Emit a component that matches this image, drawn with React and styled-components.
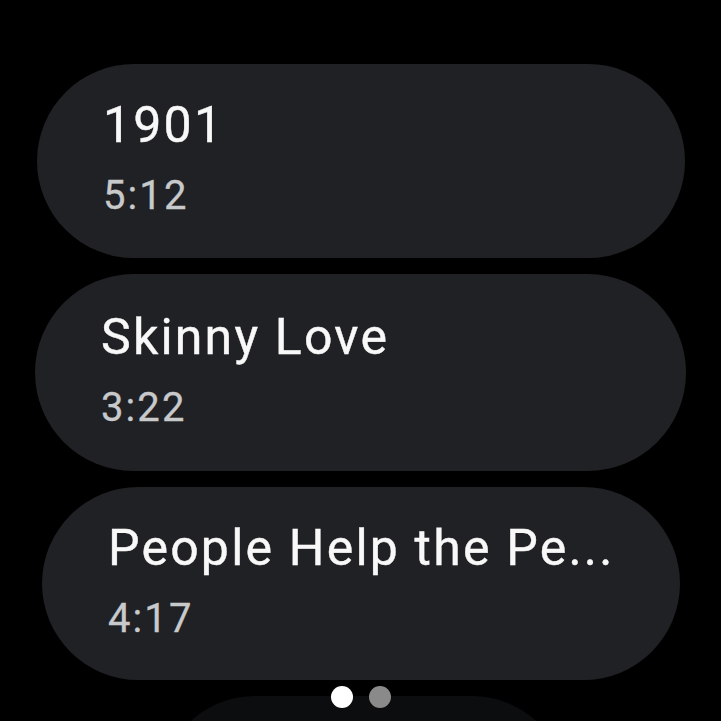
import React from "react";
import styled, { createGlobalStyle } from "styled-components";

const Global = createGlobalStyle`
  html, body { margin: 0; padding: 0; background: #000; }
  body { font-family: Roboto, "Liberation Sans", sans-serif; }
`;

const Screen = styled.div`
  position: relative;
  width: 721px;
  height: 721px;
  overflow: hidden;
  background: #000;
`;

const List = styled.div`
  display: flex;
  flex-direction: column;
  gap: 16px;
  padding-top: 64px;
`;

const Chip = styled.div`
  box-sizing: border-box;
  height: ${(p) => p.$h}px;
  margin: 0 ${(p) => p.$right}px 0 ${(p) => p.$left}px;
  border-radius: 999px;
  background: ${(p) => (p.$faded ? "#0c0d0f" : "#202124")};
  padding: 0 60px 7px 66px;
  display: flex;
  flex-direction: column;
  justify-content: center;
  gap: 17px;
  flex-shrink: 0;
`;

const Title = styled.div`
  font-size: 50px;
  font-weight: 400;
  line-height: 60px;
  letter-spacing: 2.2px;
  color: #f8f8f8;
  white-space: nowrap;
  -webkit-text-stroke: 0.4px #f8f8f8;
`;

const Duration = styled.div`
  font-size: 40px;
  font-weight: 400;
  line-height: 48px;
  letter-spacing: 2.1px;
  color: #c8c9cb;
  -webkit-text-stroke: 0.3px #c8c9cb;
`;

const Dots = styled.div`
  position: absolute;
  left: 0;
  right: 0;
  top: 686px;
  display: flex;
  justify-content: center;
  gap: 16px;
  padding-left: 1px;
`;

const Dot = styled.span`
  width: 22px;
  height: 22px;
  border-radius: 50%;
  background: ${(p) => (p.$active ? "#ffffff" : "#8a8a8a")};
`;

const songs = [
  { title: "1901", time: "5:12", h: 194, l: 37, r: 36 },
  { title: "Skinny Love", time: "3:22", h: 197, l: 35, r: 35 },
  { title: "People Help the Pe...", time: "4:17", h: 193, l: 42, r: 41 },
];

export default function App() {
  return (
    <Screen>
      <Global />
      <List>
        {songs.map((s) => (
          <Chip key={s.title} $h={s.h} $left={s.l} $right={s.r}>
            <Title>{s.title}</Title>
            <Duration>{s.time}</Duration>
          </Chip>
        ))}
        <Chip $h={190} $left={160} $right={154} $faded />
      </List>
      <Dots>
        <Dot $active />
        <Dot />
      </Dots>
    </Screen>
  );
}
